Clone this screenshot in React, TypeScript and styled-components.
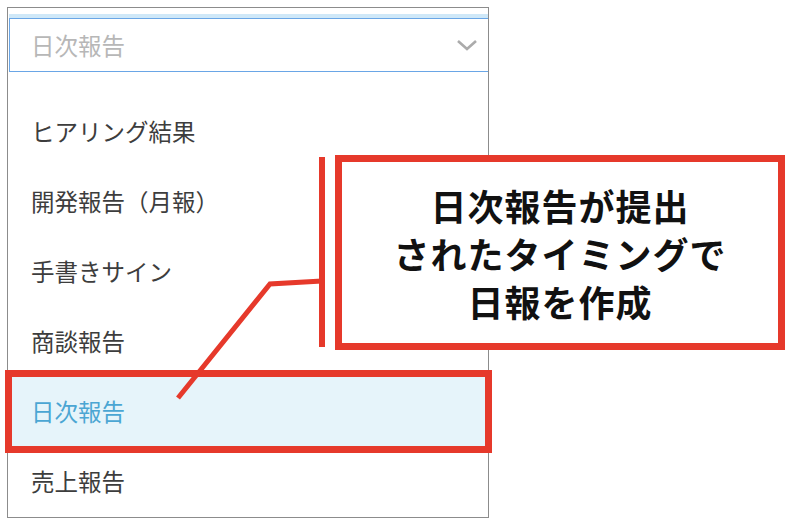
import styled, { createGlobalStyle } from 'styled-components'

const GlobalStyle = createGlobalStyle`
  html, body {
    margin: 0;
    padding: 0;
    background: #ffffff;
  }
  body {
    font-family: "Noto Sans CJK JP", "Noto Sans", sans-serif;
  }
`

const RED = '#e6392b'

const Page = styled.div`
  position: relative;
  width: 794px;
  height: 528px;
  overflow: hidden;
  padding: 7px 0 0 7px;
  box-sizing: border-box;
`

const Panel = styled.div`
  width: 482px;
  height: 511px;
  box-sizing: border-box;
  border: 1px solid #8c8c8c;
  overflow: hidden;
  display: flex;
  flex-direction: column;
`

const SelectWrap = styled.div`
  padding: 10px 0 0 1px;
`

const Select = styled.div`
  position: relative;
  height: 54px;
  box-sizing: border-box;
  border: 1px solid #6aa6e6;
  border-right: none;
  box-shadow: 0 -4px 0 #cfe8f8;
  display: flex;
  align-items: center;
  justify-content: space-between;
  padding: 0 10px 0 21px;
`

const Placeholder = styled.span`
  font-size: 23.5px;
  color: #b7b7b7;
`

const Chevron = () => (
  <svg width="22" height="14" viewBox="0 0 22 14">
    <polyline points="2,3 11,11 20,3" fill="none" stroke="#ababab" strokeWidth="2.6" />
  </svg>
)

const List = styled.ul`
  list-style: none;
  margin: 24px 0 0;
  padding: 0;
`

const Item = styled.li<{ $active?: boolean }>`
  height: 70px;
  display: flex;
  align-items: center;
  padding-left: 23px;
  font-size: 23.5px;
  color: ${({ $active }) => ($active ? '#4ba6d3' : '#3d3d3d')};
  background: ${({ $active }) => ($active ? '#e6f4fa' : 'transparent')};
`

const HighlightFrame = styled.div`
  position: absolute;
  left: 5px;
  top: 370px;
  width: 487px;
  height: 83px;
  box-sizing: border-box;
  border: 7px solid ${RED};
`

const Callout = styled.div`
  position: absolute;
  left: 335px;
  top: 155px;
  width: 450px;
  height: 195px;
  box-sizing: border-box;
  border: 7px solid ${RED};
  background: #ffffff;
  display: flex;
  align-items: center;
  justify-content: center;
  text-align: center;
  font-size: 36px;
  font-weight: 700;
  line-height: 48px;
  color: #111111;
  letter-spacing: 1px;
`

const Connector = styled.svg`
  position: absolute;
  left: 0;
  top: 0;
  pointer-events: none;
`

const items = ['ヒアリング結果', '開発報告（月報）', '手書きサイン', '商談報告', '日次報告', '売上報告']
const selected = '日次報告'

export default function App() {
  return (
    <Page>
      <GlobalStyle />
      <Panel>
        <SelectWrap>
          <Select>
            <Placeholder>{selected}</Placeholder>
            <Chevron />
          </Select>
        </SelectWrap>
        <List>
          {items.map((item) => (
            <Item key={item} $active={item === selected}>
              {item}
            </Item>
          ))}
        </List>
      </Panel>

      <HighlightFrame />

      <Connector width="794" height="528" viewBox="0 0 794 528">
        <polyline
          points="178,398 270,284 322,281"
          fill="none"
          stroke={RED}
          strokeWidth="5"
          strokeLinejoin="miter"
        />
        <line x1="322" y1="157" x2="322" y2="347" stroke={RED} strokeWidth="6" />
      </Connector>

      <Callout>
        日次報告が提出
        <br />
        されたタイミングで
        <br />
        日報を作成
      </Callout>
    </Page>
  )
}
